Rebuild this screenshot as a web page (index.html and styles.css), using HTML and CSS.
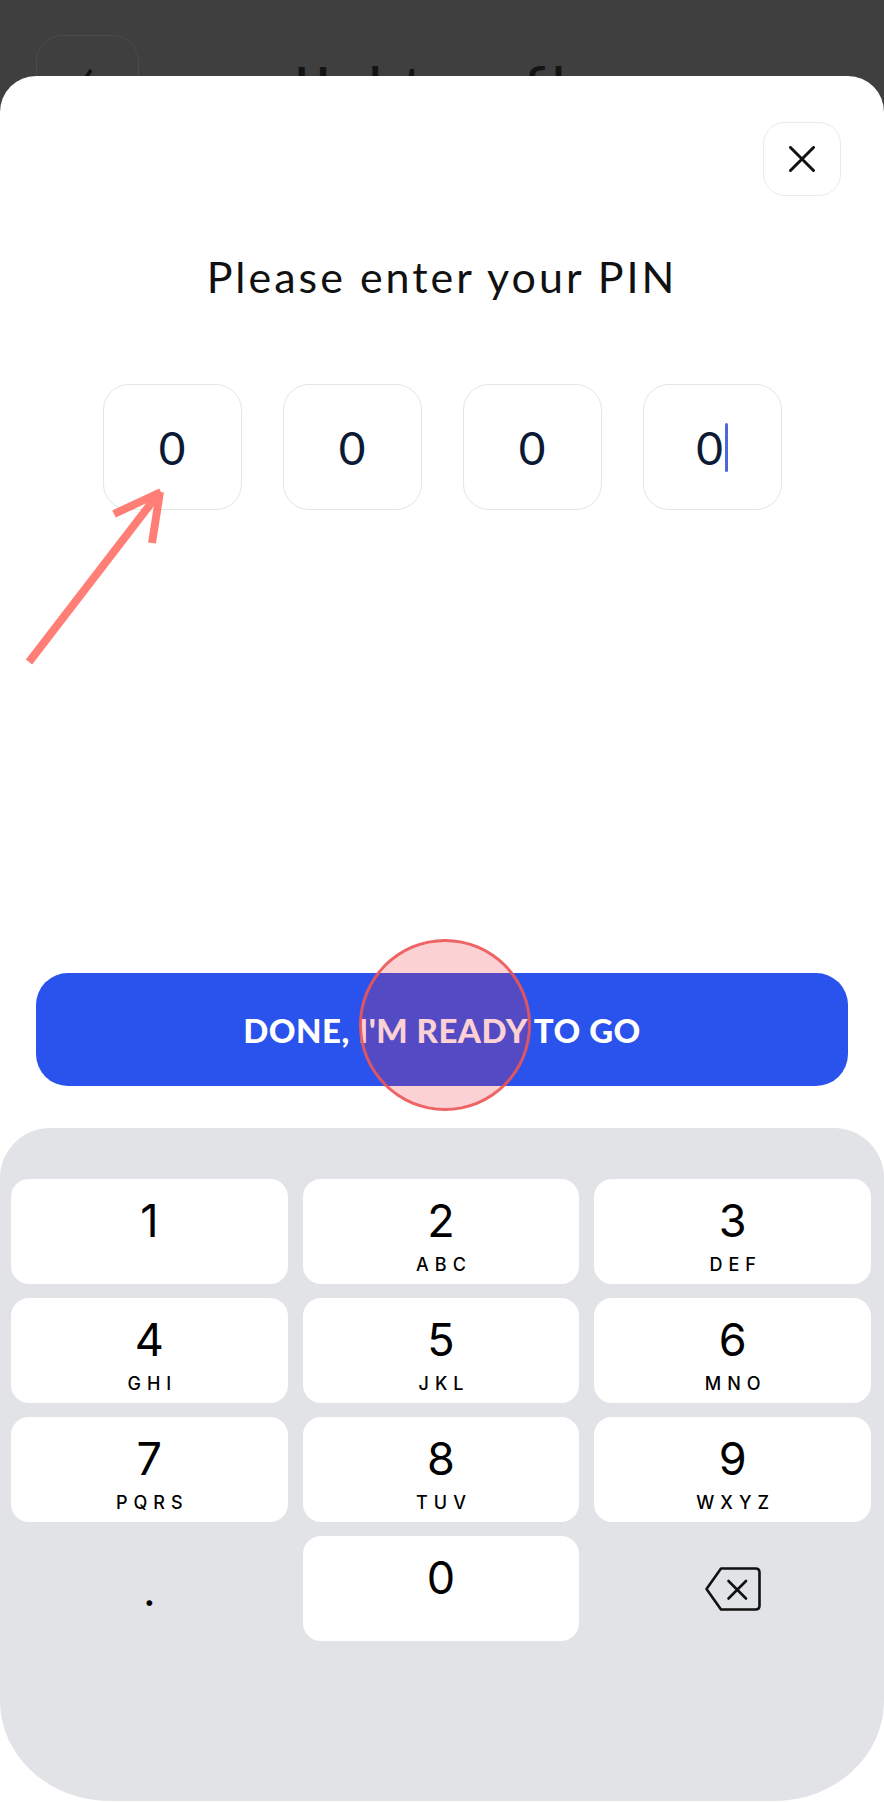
FILE: index.html
```html
<!DOCTYPE html>
<html lang="en-US">
<head>
	<meta charset="utf-8">
	<title>Update profile - Enter PIN</title>
	<link rel="stylesheet" href="styles.css">
</head>
<body>
<div class="screen">

<!-- page behind the sheet (dimmed) -->
<div class="topbar">
	<span class="back-btn">&#8249;</span>
	<span class="page-title">Update profile</span>
	<span></span>
</div>

<!-- pin sheet -->
<div class="sheet">
	<button class="close-btn" aria-label="Close">
		<svg width="26" height="26" viewBox="0 0 26 26"><path d="M1.5 1.5 L24.5 24.5 M24.5 1.5 L1.5 24.5" stroke="#111" stroke-width="3" stroke-linecap="round"/></svg>
	</button>

	<h1 class="title">Please enter your PIN</h1>

	<div class="pins">
		<div class="pin">0</div>
		<div class="pin">0</div>
		<div class="pin">0</div>
		<div class="pin">0<span class="caret"></span></div>
	</div>

	<button class="done-btn">DONE, I'M READY TO GO</button>

	<!--number pad-->
	<div class="keypad">
		<div class="key"><span class="num">1</span></div>
		<div class="key"><span class="num">2</span><span class="abc">ABC</span></div>
		<div class="key"><span class="num">3</span><span class="abc">DEF</span></div>
		<div class="key"><span class="num">4</span><span class="abc">GHI</span></div>
		<div class="key"><span class="num">5</span><span class="abc">JKL</span></div>
		<div class="key"><span class="num">6</span><span class="abc">MNO</span></div>
		<div class="key"><span class="num">7</span><span class="abc">PQRS</span></div>
		<div class="key"><span class="num">8</span><span class="abc">TUV</span></div>
		<div class="key"><span class="num">9</span><span class="abc">WXYZ</span></div>
		<div class="key key-flat"><span class="dot">.</span></div>
		<div class="key"><span class="num">0</span></div>
		<div class="key key-flat">
			<svg width="58" height="46" viewBox="0 0 58 46"><path d="M17 2.5 H51.5 Q55.5 2.5 55.5 6.5 V39.5 Q55.5 43.5 51.5 43.5 H17 L2.5 23 Z" fill="none" stroke="#111" stroke-width="2.6" stroke-linejoin="round"/><path d="M24.5 15 L42 32.5 M42 15 L24.5 32.5" stroke="#111" stroke-width="2.6" stroke-linecap="round"/></svg>
		</div>
	</div>
</div>

<!-- screen recording annotations -->
<svg class="arrow-mark" width="200" height="220" viewBox="0 0 200 220">
	<g stroke="#ff5a50" stroke-width="8" opacity="0.78">
		<line x1="29" y1="202" x2="159" y2="33"/>
		<line x1="114" y1="54" x2="161" y2="32"/>
		<line x1="152" y1="83" x2="160" y2="32"/>
	</g>
</svg>
<span class="tap-mark"></span>

</div>
</body>
</html>
```

FILE: styles.css
```css
html, body {
	margin: 0;
	padding: 0;
}
body {
	background: #3f3f40;
	font-family: Lato, "Open Sans", sans-serif;
}
.screen {
	position: relative;
	width: 884px;
	height: 1803px;
	overflow: hidden;
}

/* dimmed page behind */
.topbar {
	height: 76px;
	overflow: hidden;
	display: grid;
	grid-template-columns: 103px 1fr 103px;
	padding: 0 36px;
	align-items: start;
}
.back-btn {
	margin-top: 35px;
	height: 103px;
	border: 1.5px solid #4b4b4c;
	border-radius: 26px;
	box-sizing: border-box;
	color: #111;
	font-size: 60px;
	line-height: 76px;
	text-align: center;
}
.page-title {
	margin-top: 60px;
	font-size: 46px;
	line-height: 46px;
	font-weight: 700;
	color: #141414;
	text-align: center;
}

/* sheet */
.sheet {
	height: 1727px;
	background: #fff;
	border-radius: 36px 36px 0 0;
	display: flex;
	flex-direction: column;
	align-items: center;
}
.close-btn {
	align-self: flex-end;
	margin: 46px 43px 0 0;
	width: 78px;
	height: 74px;
	border: 1.5px solid #ebebeb;
	border-radius: 22px;
	background: #fff;
	display: flex;
	align-items: center;
	justify-content: center;
	padding: 0;
}
.title {
	margin: 56px 0 0;
	font-size: 43px;
	line-height: 50px;
	font-weight: 400;
	letter-spacing: 3px;
	color: #111;
	text-align: center;
}
.pins {
	margin-top: 82px;
	display: flex;
	gap: 41px;
}
.pin {
	width: 139px;
	height: 126px;
	box-sizing: border-box;
	border: 1.5px solid #e5e5e5;
	border-radius: 26px;
	display: flex;
	align-items: center;
	justify-content: center;
	font-size: 46px;
	color: #0c1a36;
}
.caret {
	width: 3px;
	height: 49px;
	margin-left: 2px;
	background: #4b68d8;
	border-radius: 2px;
}
.done-btn {
	margin-top: 463px;
	width: 812px;
	height: 113px;
	border: none;
	border-radius: 32px;
	background: #2a52ec;
	color: #fff;
	font-family: Lato, sans-serif;
	font-weight: 900;
	font-size: 33px;
	letter-spacing: 0.5px;
}

/* keypad */
.keypad {
	margin-top: 42px;
	width: 884px;
	height: 673px;
	box-sizing: border-box;
	background: #e2e3e6;
	border-radius: 50px 50px 110px 110px / 50px 50px 100px 100px;
	padding: 51px 13px 0 11px;
	display: grid;
	grid-template-columns: repeat(3, 1fr);
	grid-auto-rows: 105px;
	gap: 14px 15px;
	align-content: start;
}
.key {
	background: #fff;
	border-radius: 18px;
	display: flex;
	flex-direction: column;
	align-items: center;
	padding-top: 20px;
	box-sizing: border-box;
	font-family: Inter, sans-serif;
	color: #000;
}
.key-flat {
	background: transparent;
	padding-top: 0;
	justify-content: center;
}
.num {
	font-size: 45px;
	line-height: 44px;
	font-weight: 400;
}
.abc {
	margin-top: 13px;
	font-size: 18px;
	line-height: 18px;
	font-weight: 500;
	letter-spacing: 6px;
	padding-left: 6px;
}
.dot {
	font-size: 44px;
	line-height: 44px;
	margin-top: 2px;
}

/* annotations from the screen recording */
.arrow-mark {
	position: absolute;
	left: 0;
	top: 460px;
}
.tap-mark {
	position: absolute;
	left: 359px;
	top: 939px;
	width: 172px;
	height: 172px;
	box-sizing: border-box;
	border-radius: 50%;
	border: 3px solid rgba(236, 86, 86, 0.9);
	background: rgba(237, 45, 55, 0.22);
}
```
